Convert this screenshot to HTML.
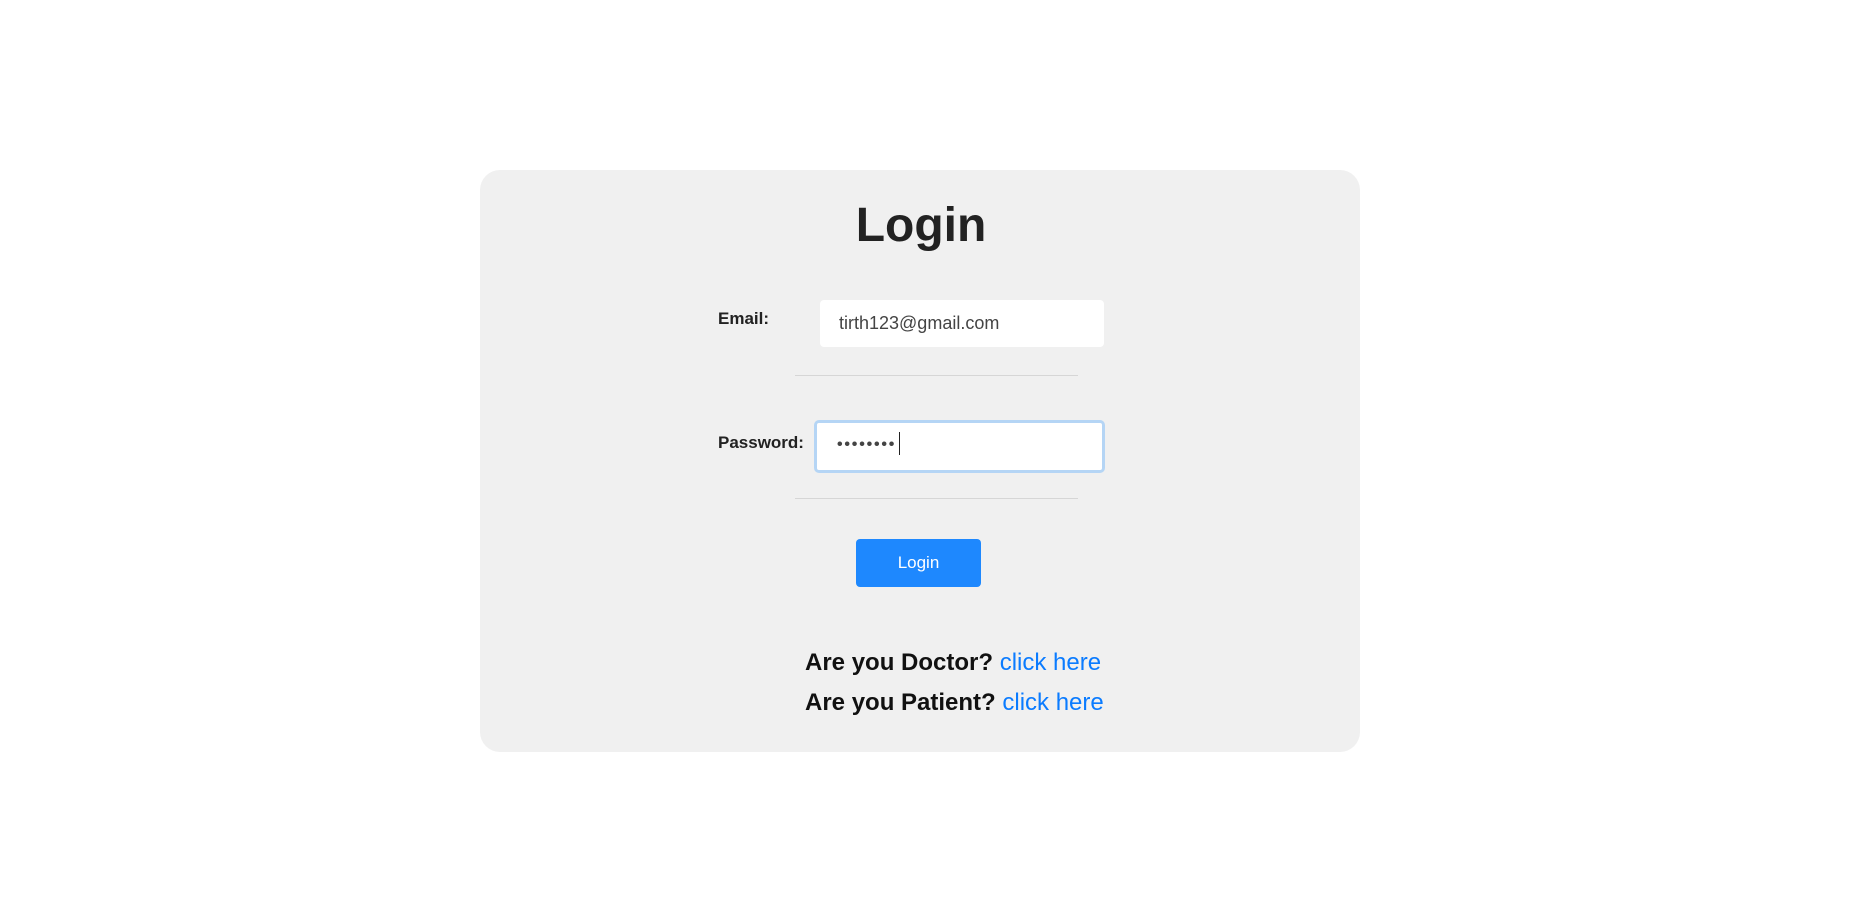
<!DOCTYPE html>
<html><head><meta charset="utf-8"><style>
body{margin:0;width:1875px;height:897px;background:#fff;font-family:"Liberation Sans",sans-serif;position:relative;overflow:hidden}
.card{position:absolute;left:480px;top:170px;width:880px;height:582px;background:#f0f0f0;border-radius:20px}
.a{position:absolute;white-space:nowrap}
h1{position:absolute;margin:0;left:821px;width:200px;text-align:center;top:198px;font-size:48px;font-weight:bold;color:#222;}
.lbl{font-weight:bold;font-size:17px;color:#222}
.inp{position:absolute;background:#fff;border-radius:4px;box-sizing:border-box}
.hr{position:absolute;left:795px;width:283px;height:1px;background:#d6d6d6}
.q{font-weight:bold;font-size:24px;color:#111}
.q span{font-weight:normal;color:#0a7bff}
</style></head><body>
<div class="card"></div>
<h1>Login</h1>
<div class="a lbl" style="left:718px;top:309px">Email:</div>
<div class="inp" style="left:820px;top:300px;width:284px;height:47px"></div>
<div class="a" style="left:839px;top:313px;font-size:18px;color:#444">tirth123@gmail.com</div>
<div class="hr" style="top:375px"></div>
<div class="a lbl" style="left:718px;top:433px">Password:</div>
<div class="inp" style="left:814px;top:420px;width:291px;height:53px;border:3px solid #b5d5f5;border-radius:5px"></div>
<div class="a" style="left:837px;top:436px;font-size:16px;color:#444;letter-spacing:1.8px;font-weight:bold">••••••••</div>
<div class="a" style="left:899px;top:432px;width:1px;height:23px;background:#222"></div>
<div class="hr" style="top:498px"></div>
<div class="a" style="left:856px;top:539px;width:125px;height:48px;background:#1e88fe;border-radius:4px;color:#fff;font-size:17px;text-align:center;line-height:48px">Login</div>
<div class="a q" style="left:805px;top:649px">Are you Doctor? <span>click here</span></div>
<div class="a q" style="left:805px;top:689px">Are you Patient? <span>click here</span></div>
</body></html>
